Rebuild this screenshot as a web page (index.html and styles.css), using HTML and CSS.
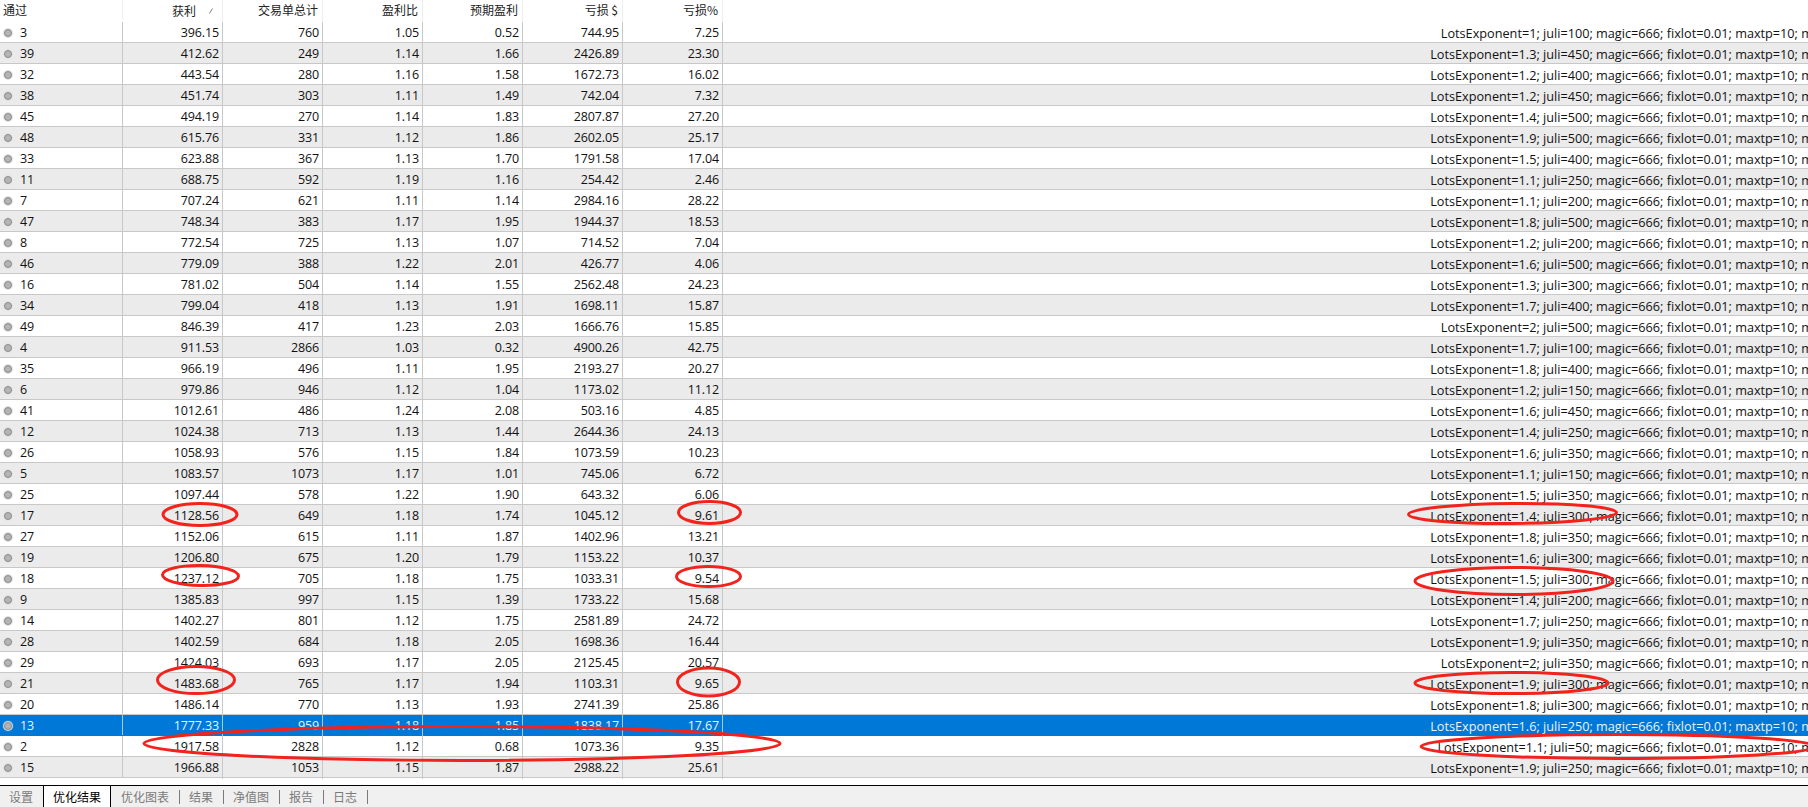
FILE: index.html
```html
<!DOCTYPE html>
<html lang="zh">
<head>
<meta charset="utf-8">
<title>优化结果</title>
<link rel="stylesheet" href="styles.css">
</head>
<body>
<main class="results">
<div class="row head"><span class="first">通过</span><span class="sorted">获利<svg class="sort" width="4" height="6" viewBox="0 0 4 6"><path d="M0.5 5.5L3.5 0.5"/></svg></span><span>交易单总计</span><span>盈利比</span><span>预期盈利</span><span>亏损 $</span><span>亏损%</span><span></span></div>
<div class="row"><span class="first"><i class="dot"></i>3</span><span>396.15</span><span>760</span><span>1.05</span><span>0.52</span><span>744.95</span><span>7.25</span><span class="params">LotsExponent=1; juli=100; magic=666; fixlot=0.01; maxtp=10; m</span></div>
<div class="row"><span class="first"><i class="dot"></i>39</span><span>412.62</span><span>249</span><span>1.14</span><span>1.66</span><span>2426.89</span><span>23.30</span><span class="params">LotsExponent=1.3; juli=450; magic=666; fixlot=0.01; maxtp=10; m</span></div>
<div class="row"><span class="first"><i class="dot"></i>32</span><span>443.54</span><span>280</span><span>1.16</span><span>1.58</span><span>1672.73</span><span>16.02</span><span class="params">LotsExponent=1.2; juli=400; magic=666; fixlot=0.01; maxtp=10; m</span></div>
<div class="row"><span class="first"><i class="dot"></i>38</span><span>451.74</span><span>303</span><span>1.11</span><span>1.49</span><span>742.04</span><span>7.32</span><span class="params">LotsExponent=1.2; juli=450; magic=666; fixlot=0.01; maxtp=10; m</span></div>
<div class="row"><span class="first"><i class="dot"></i>45</span><span>494.19</span><span>270</span><span>1.14</span><span>1.83</span><span>2807.87</span><span>27.20</span><span class="params">LotsExponent=1.4; juli=500; magic=666; fixlot=0.01; maxtp=10; m</span></div>
<div class="row"><span class="first"><i class="dot"></i>48</span><span>615.76</span><span>331</span><span>1.12</span><span>1.86</span><span>2602.05</span><span>25.17</span><span class="params">LotsExponent=1.9; juli=500; magic=666; fixlot=0.01; maxtp=10; m</span></div>
<div class="row"><span class="first"><i class="dot"></i>33</span><span>623.88</span><span>367</span><span>1.13</span><span>1.70</span><span>1791.58</span><span>17.04</span><span class="params">LotsExponent=1.5; juli=400; magic=666; fixlot=0.01; maxtp=10; m</span></div>
<div class="row"><span class="first"><i class="dot"></i>11</span><span>688.75</span><span>592</span><span>1.19</span><span>1.16</span><span>254.42</span><span>2.46</span><span class="params">LotsExponent=1.1; juli=250; magic=666; fixlot=0.01; maxtp=10; m</span></div>
<div class="row"><span class="first"><i class="dot"></i>7</span><span>707.24</span><span>621</span><span>1.11</span><span>1.14</span><span>2984.16</span><span>28.22</span><span class="params">LotsExponent=1.1; juli=200; magic=666; fixlot=0.01; maxtp=10; m</span></div>
<div class="row"><span class="first"><i class="dot"></i>47</span><span>748.34</span><span>383</span><span>1.17</span><span>1.95</span><span>1944.37</span><span>18.53</span><span class="params">LotsExponent=1.8; juli=500; magic=666; fixlot=0.01; maxtp=10; m</span></div>
<div class="row"><span class="first"><i class="dot"></i>8</span><span>772.54</span><span>725</span><span>1.13</span><span>1.07</span><span>714.52</span><span>7.04</span><span class="params">LotsExponent=1.2; juli=200; magic=666; fixlot=0.01; maxtp=10; m</span></div>
<div class="row"><span class="first"><i class="dot"></i>46</span><span>779.09</span><span>388</span><span>1.22</span><span>2.01</span><span>426.77</span><span>4.06</span><span class="params">LotsExponent=1.6; juli=500; magic=666; fixlot=0.01; maxtp=10; m</span></div>
<div class="row"><span class="first"><i class="dot"></i>16</span><span>781.02</span><span>504</span><span>1.14</span><span>1.55</span><span>2562.48</span><span>24.23</span><span class="params">LotsExponent=1.3; juli=300; magic=666; fixlot=0.01; maxtp=10; m</span></div>
<div class="row"><span class="first"><i class="dot"></i>34</span><span>799.04</span><span>418</span><span>1.13</span><span>1.91</span><span>1698.11</span><span>15.87</span><span class="params">LotsExponent=1.7; juli=400; magic=666; fixlot=0.01; maxtp=10; m</span></div>
<div class="row"><span class="first"><i class="dot"></i>49</span><span>846.39</span><span>417</span><span>1.23</span><span>2.03</span><span>1666.76</span><span>15.85</span><span class="params">LotsExponent=2; juli=500; magic=666; fixlot=0.01; maxtp=10; m</span></div>
<div class="row"><span class="first"><i class="dot"></i>4</span><span>911.53</span><span>2866</span><span>1.03</span><span>0.32</span><span>4900.26</span><span>42.75</span><span class="params">LotsExponent=1.7; juli=100; magic=666; fixlot=0.01; maxtp=10; m</span></div>
<div class="row"><span class="first"><i class="dot"></i>35</span><span>966.19</span><span>496</span><span>1.11</span><span>1.95</span><span>2193.27</span><span>20.27</span><span class="params">LotsExponent=1.8; juli=400; magic=666; fixlot=0.01; maxtp=10; m</span></div>
<div class="row"><span class="first"><i class="dot"></i>6</span><span>979.86</span><span>946</span><span>1.12</span><span>1.04</span><span>1173.02</span><span>11.12</span><span class="params">LotsExponent=1.2; juli=150; magic=666; fixlot=0.01; maxtp=10; m</span></div>
<div class="row"><span class="first"><i class="dot"></i>41</span><span>1012.61</span><span>486</span><span>1.24</span><span>2.08</span><span>503.16</span><span>4.85</span><span class="params">LotsExponent=1.6; juli=450; magic=666; fixlot=0.01; maxtp=10; m</span></div>
<div class="row"><span class="first"><i class="dot"></i>12</span><span>1024.38</span><span>713</span><span>1.13</span><span>1.44</span><span>2644.36</span><span>24.13</span><span class="params">LotsExponent=1.4; juli=250; magic=666; fixlot=0.01; maxtp=10; m</span></div>
<div class="row"><span class="first"><i class="dot"></i>26</span><span>1058.93</span><span>576</span><span>1.15</span><span>1.84</span><span>1073.59</span><span>10.23</span><span class="params">LotsExponent=1.6; juli=350; magic=666; fixlot=0.01; maxtp=10; m</span></div>
<div class="row"><span class="first"><i class="dot"></i>5</span><span>1083.57</span><span>1073</span><span>1.17</span><span>1.01</span><span>745.06</span><span>6.72</span><span class="params">LotsExponent=1.1; juli=150; magic=666; fixlot=0.01; maxtp=10; m</span></div>
<div class="row"><span class="first"><i class="dot"></i>25</span><span>1097.44</span><span>578</span><span>1.22</span><span>1.90</span><span>643.32</span><span>6.06</span><span class="params">LotsExponent=1.5; juli=350; magic=666; fixlot=0.01; maxtp=10; m</span></div>
<div class="row"><span class="first"><i class="dot"></i>17</span><span>1128.56</span><span>649</span><span>1.18</span><span>1.74</span><span>1045.12</span><span>9.61</span><span class="params">LotsExponent=1.4; juli=300; magic=666; fixlot=0.01; maxtp=10; m</span></div>
<div class="row"><span class="first"><i class="dot"></i>27</span><span>1152.06</span><span>615</span><span>1.11</span><span>1.87</span><span>1402.96</span><span>13.21</span><span class="params">LotsExponent=1.8; juli=350; magic=666; fixlot=0.01; maxtp=10; m</span></div>
<div class="row"><span class="first"><i class="dot"></i>19</span><span>1206.80</span><span>675</span><span>1.20</span><span>1.79</span><span>1153.22</span><span>10.37</span><span class="params">LotsExponent=1.6; juli=300; magic=666; fixlot=0.01; maxtp=10; m</span></div>
<div class="row"><span class="first"><i class="dot"></i>18</span><span>1237.12</span><span>705</span><span>1.18</span><span>1.75</span><span>1033.31</span><span>9.54</span><span class="params">LotsExponent=1.5; juli=300; magic=666; fixlot=0.01; maxtp=10; m</span></div>
<div class="row"><span class="first"><i class="dot"></i>9</span><span>1385.83</span><span>997</span><span>1.15</span><span>1.39</span><span>1733.22</span><span>15.68</span><span class="params">LotsExponent=1.4; juli=200; magic=666; fixlot=0.01; maxtp=10; m</span></div>
<div class="row"><span class="first"><i class="dot"></i>14</span><span>1402.27</span><span>801</span><span>1.12</span><span>1.75</span><span>2581.89</span><span>24.72</span><span class="params">LotsExponent=1.7; juli=250; magic=666; fixlot=0.01; maxtp=10; m</span></div>
<div class="row"><span class="first"><i class="dot"></i>28</span><span>1402.59</span><span>684</span><span>1.18</span><span>2.05</span><span>1698.36</span><span>16.44</span><span class="params">LotsExponent=1.9; juli=350; magic=666; fixlot=0.01; maxtp=10; m</span></div>
<div class="row"><span class="first"><i class="dot"></i>29</span><span>1424.03</span><span>693</span><span>1.17</span><span>2.05</span><span>2125.45</span><span>20.57</span><span class="params">LotsExponent=2; juli=350; magic=666; fixlot=0.01; maxtp=10; m</span></div>
<div class="row"><span class="first"><i class="dot"></i>21</span><span>1483.68</span><span>765</span><span>1.17</span><span>1.94</span><span>1103.31</span><span>9.65</span><span class="params">LotsExponent=1.9; juli=300; magic=666; fixlot=0.01; maxtp=10; m</span></div>
<div class="row"><span class="first"><i class="dot"></i>20</span><span>1486.14</span><span>770</span><span>1.13</span><span>1.93</span><span>2741.39</span><span>25.86</span><span class="params">LotsExponent=1.8; juli=300; magic=666; fixlot=0.01; maxtp=10; m</span></div>
<div class="row selected"><span class="first"><i class="dot"></i>13</span><span>1777.33</span><span>959</span><span>1.18</span><span>1.85</span><span>1838.17</span><span>17.67</span><span class="params">LotsExponent=1.6; juli=250; magic=666; fixlot=0.01; maxtp=10; m</span></div>
<div class="row"><span class="first"><i class="dot"></i>2</span><span>1917.58</span><span>2828</span><span>1.12</span><span>0.68</span><span>1073.36</span><span>9.35</span><span class="params">LotsExponent=1.1; juli=50; magic=666; fixlot=0.01; maxtp=10; m</span></div>
<div class="row"><span class="first"><i class="dot"></i>15</span><span>1966.88</span><span>1053</span><span>1.15</span><span>1.87</span><span>2988.22</span><span>25.61</span><span class="params">LotsExponent=1.9; juli=250; magic=666; fixlot=0.01; maxtp=10; m</span></div>
</main>
<nav class="tabs">
<a class="tab plain">设置</a>
<a class="tab active">优化结果</a>
<a class="tab"><span>优化图表</span></a>
<a class="tab"><span>结果</span></a>
<a class="tab"><span>净值图</span></a>
<a class="tab"><span>报告</span></a>
<a class="tab"><span>日志</span></a>
</nav>
<svg class="marks" width="1808" height="807" viewBox="0 0 1808 807">
<ellipse cx="200" cy="514.5" rx="37" ry="11"/>
<ellipse cx="200.5" cy="575.5" rx="38" ry="10" transform="rotate(1 200 575)"/>
<ellipse cx="196" cy="680" rx="38.5" ry="13.5"/>
<ellipse cx="709.5" cy="512.5" rx="31" ry="11"/>
<ellipse cx="708.5" cy="576.5" rx="32" ry="10"/>
<ellipse cx="708.5" cy="682" rx="31" ry="14"/>
<ellipse cx="462" cy="743.5" rx="318" ry="17"/>
<ellipse cx="1512.5" cy="513.5" rx="104" ry="10" transform="rotate(-0.5 1512 513)"/>
<ellipse cx="1514" cy="581" rx="99" ry="13.5"/>
<ellipse cx="1511.5" cy="683" rx="96.5" ry="10.5"/>
<ellipse cx="1618" cy="746.5" rx="197" ry="12"/>
</svg>
</body>
</html>
```
FILE: styles.css
```css
html, body {
  margin: 0;
  height: 100%;
}

body {
  width: 1808px;
  height: 807px;
  position: relative;
  display: flex;
  flex-direction: column;
  overflow: hidden;
  background: #fff;
  color: #111;
  font: 12.5px/22px "Open Sans", "Noto Sans CJK SC", sans-serif;
  letter-spacing: -0.12px;
}

.results {
  flex: 1;
  min-height: 0;
}

.row {
  display: grid;
  grid-template-columns: 123px repeat(6, 100px) 1090px;
  height: 21px;
  box-sizing: border-box;
  border-bottom: 1px solid #c8c8c8;
  white-space: nowrap;
}

.row:nth-child(odd) {
  background: #ebebeb;
}

.row > span {
  box-sizing: border-box;
  padding-right: 3px;
  border-right: 1px solid #c8c8c8;
  text-align: right;
}

.row > .first {
  display: flex;
  align-items: center;
  padding: 1px 0 0;
  text-align: left;
}

.row > .params {
  border-right: 0;
  padding-right: 0;
  font-size: 12.7px;
  letter-spacing: 0;
}

.row.head {
  height: 22px;
  border-bottom: 0;
  background: #fff;
  color: #222;
  font-family: "Noto Sans CJK SC", "Open Sans", sans-serif;
  font-size: 12px;
  letter-spacing: 0;
  line-height: 20px;
}

.head > span {
  padding-right: 4px;
  border-right-color: #eeeeee;
}

.row > .first:first-child {
  height: 20px;
}

.head > .first {
  padding: 0 0 0 3px;
}

.head > span:last-child {
  border-right: 0;
}

.head > .sorted {
  display: flex;
  justify-content: flex-end;
  align-items: center;
  gap: 13px;
  padding-right: 9px;
}

.sort {
  fill: none;
  stroke: #808080;
  stroke-width: 1;
}

.dot {
  flex: none;
  width: 8px;
  height: 8px;
  margin: 0 8px 0 4px;
  border-radius: 50%;
  border: 1px solid #8c8c8c;
  box-sizing: border-box;
  background: #b4b4b4;
  box-shadow: 0 0 1px 1px #e4e4e4;
}

.row.selected {
  background: #0078d7;
  border-bottom-color: #0078d7;
  color: #eaf4fc;
}

.selected > span {
  border-right-color: #a8c8e4;
}

.tabs {
  display: flex;
  flex: none;
  height: 22px;
  box-sizing: border-box;
  border-top: 1px solid #000;
  background: #f0f0f0;
  color: #7a7a7a;
  font-family: "Noto Sans CJK SC", sans-serif;
  font-size: 12px;
  letter-spacing: 0;
  line-height: 20px;
}

.tab {
  display: flex;
  align-items: center;
  height: 21px;
  padding: 0 0 0 9px;
}

.tab > span {
  display: block;
  height: 14px;
  line-height: 14px;
  padding-right: 10px;
  border-right: 1px solid #7a7a7a;
}

.tab.plain {
  padding: 0 10px 0 9px;
}

.tab.active {
  box-sizing: border-box;
  padding: 0 9px;
  width: 68px;
  background: #fff;
  color: #000;
  border-left: 1px solid #000;
  border-right: 1px solid #000;
}

.active + .tab {
  padding-left: 10px;
}

.marks {
  position: absolute;
  left: 0;
  top: 0;
  fill: none;
  stroke: #f2221c;
  stroke-width: 3;
  pointer-events: none;
}
```
